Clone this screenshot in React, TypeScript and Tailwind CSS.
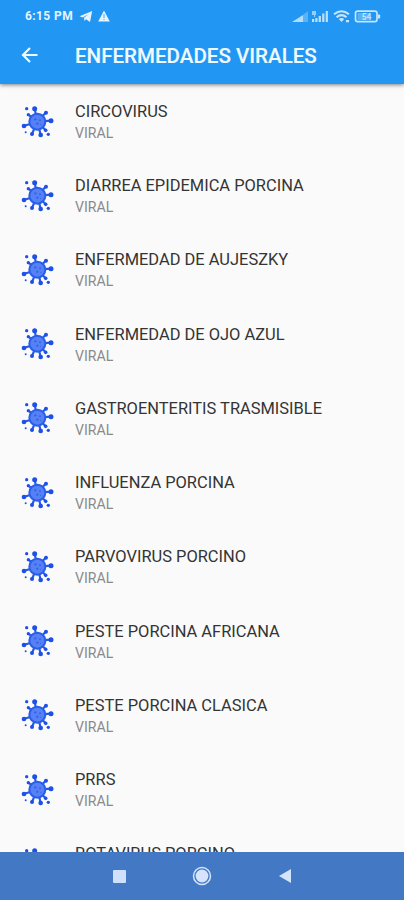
const diseases = [
  'CIRCOVIRUS',
  'DIARREA EPIDEMICA PORCINA',
  'ENFERMEDAD DE AUJESZKY',
  'ENFERMEDAD DE OJO AZUL',
  'GASTROENTERITIS TRASMISIBLE',
  'INFLUENZA PORCINA',
  'PARVOVIRUS PORCINO',
  'PESTE PORCINA AFRICANA',
  'PESTE PORCINA CLASICA',
  'PRRS',
  'ROTAVIRUS PORCINO',
];

function VirusIcon() {
  return (
    <svg viewBox="30 40 105 105" className="h-[35px] w-[35px] shrink-0">
      <path
        d="M74 54 82 93 107 66M55 72 82 93 123 90M82 93 107 119M92 132 82 93 66 130M41 106 82 93"
        fill="none"
        stroke="#2459e4"
        strokeWidth="6.5"
      />
      <g fill="#1d50e8">
        <circle cx="50" cy="54" r="5" />
        <circle cx="74" cy="54" r="7.5" />
        <circle cx="108" cy="66" r="6" />
        <circle cx="55" cy="72" r="5" />
        <circle cx="123" cy="90" r="7.5" />
        <circle cx="107" cy="119" r="5.5" />
        <circle cx="115" cy="131" r="5" />
        <circle cx="92" cy="133" r="7" />
        <circle cx="66" cy="130" r="6" />
        <circle cx="42" cy="106" r="7" />
        <circle cx="47" cy="125" r="3" />
      </g>
      <circle cx="82" cy="93" r="24" fill="#5580f6" stroke="#2a5de8" strokeWidth="6" />
      <g fill="#3564e6">
        <circle cx="76" cy="86" r="3.5" />
        <circle cx="90" cy="89" r="3" />
        <circle cx="82" cy="99" r="3.5" />
        <circle cx="92" cy="101" r="2" />
      </g>
    </svg>
  );
}

function StatusBar() {
  return (
    <div className="flex h-8 items-center pl-[25px] pr-[22px] text-[#e3f4ff]">
      <span className="w-[49px] whitespace-nowrap text-[12px] font-bold leading-none tracking-[0.4px]">6:15 PM</span>
      <svg viewBox="0 0 14 14" className="ml-[5px] h-[14px] w-[14px]" fill="currentColor">
        <path d="M.5 7.2 13.2 2 11 13 7 10.3 5.5 12 5 8.8 9.5 5 3.8 8.4z" />
      </svg>
      <svg viewBox="0 0 12 12" className="ml-[5px] h-3 w-3" fill="currentColor">
        <path d="M6 .5 11.8 11.5H.2z" />
        <path d="M6 4v4M6 9v1" stroke="#2196f3" strokeWidth=".8" />
      </svg>
      <svg viewBox="0 0 90 16" className="ml-auto h-4 w-[90px]" fill="currentColor">
        <path d="M0 14 11 7v7z" opacity=".75" />
        <path d="M11 7 16 3v11h-5z" opacity=".3" />
        <g opacity=".8">
          <path d="M20 11h2.2v3H20zM23.3 10h2.2v4h-2.2zM26.7 8h2.2v6h-2.2zM30.2 5.5h2.2V14h-2.2zM33.7 3h2.2v11h-2.2z" />
          <path d="M20 3h4v4h-1v2h-1V7h-2z" opacity=".75" />
        </g>
        <g fill="none" stroke="currentColor" strokeWidth="2" opacity=".85">
          <path d="M42 6.3Q49.5.2 57 6.3M44.5 9.3Q49.5 5 54.5 9.3" />
          <path d="m46.8 11 2.7 3 2.7-3Q49.5 9 46.8 11z" fill="currentColor" stroke="none" />
          <path d="M54 12h3v2.3h-3z" fill="currentColor" stroke="none" />
        </g>
        <g opacity=".85">
          <rect x="63.5" y="3.1" width="21.5" height="10.6" rx="2.2" fill="none" stroke="currentColor" strokeWidth="1.7" />
          <rect x="65.5" y="5" width="12" height="7" opacity=".35" />
          <path d="M86 6.5h1.2q1 0 1 1v2q0 1-1 1H86z" />
          <text x="69.7" y="11.6" fontSize="8.5" fontFamily="Roboto, sans-serif" fontWeight="700">54</text>
        </g>
      </svg>
    </div>
  );
}

export default function App() {
  return (
    <div className="flex h-[900px] w-[404px] flex-col overflow-hidden bg-[#fafafa] font-[Roboto,sans-serif]">
      <header className="z-10 h-[84px] shrink-0 bg-[#2196f3] shadow-[0_1px_4px_rgba(0,0,0,0.5)]">
        <StatusBar />
        <div className="flex h-[48px] items-center pl-[21px] text-[#effaff]">
          <svg viewBox="0 0 18 18" className="h-[18px] w-[18px] -translate-y-px" fill="none" stroke="currentColor" strokeWidth="2.2">
            <path d="M16.5 9H2M9 2 2 9 9 16" />
          </svg>
          <h1 className="ml-9 whitespace-nowrap text-[20.55px] font-medium leading-none [-webkit-text-stroke:0.15px_#effaff]">ENFERMEDADES VIRALES</h1>
        </div>
      </header>
      <main className="min-h-0 flex-1 overflow-hidden pt-[14px]">
        {diseases.map((name) => (
          <div key={name} className="flex h-[74.22px] items-start pl-5">
            <div className="pt-[5.6px]"><VirusIcon /></div>
            <div className="ml-5 whitespace-nowrap pt-[4px]">
              <div className="text-[16.44px] leading-[20px] text-[#343434]">{name}</div>
              <div className="mt-px text-[14.1px] leading-[20px] text-[#8a8a8a]">VIRAL</div>
            </div>
          </div>
        ))}
      </main>
      <nav className="flex h-12 shrink-0 items-center bg-[#4378c4] pl-[113px] text-[#d5e4fa]">
        <div className="h-[13px] w-[13px] rounded-[1px] bg-[#cfe0fa]" />
        <svg viewBox="0 0 20 20" className="ml-[66px] h-5 w-5" fill="currentColor">
          <circle cx="10" cy="10" r="8.5" fill="none" stroke="currentColor" strokeWidth="1.5" />
          <circle cx="10" cy="10" r="6.4" />
        </svg>
        <svg viewBox="0 0 12 14" className="ml-[67px] h-[14px] w-3" fill="currentColor">
          <path d="M0 7 12 0v14z" />
        </svg>
      </nav>
    </div>
  );
}
